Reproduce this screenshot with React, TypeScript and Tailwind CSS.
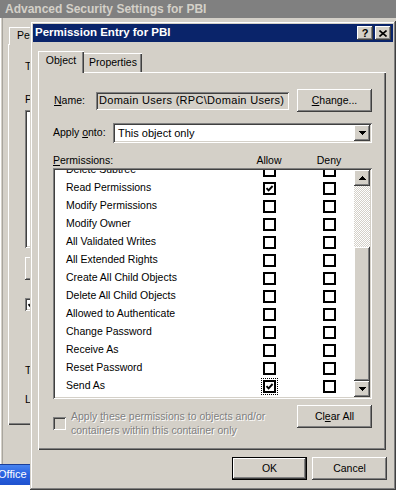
import React from "react";

const RAISED =
  "shadow-[inset_-1px_-1px_#404040,inset_1px_1px_#ffffff,inset_-2px_-2px_#808080,inset_2px_2px_#d4d0c8]";
const SUNKEN =
  "shadow-[inset_1px_1px_#808080,inset_-1px_-1px_#ffffff,inset_2px_2px_#404040,inset_-2px_-2px_#d4d0c8]";

function Btn({ children, className = "" }: { children?: React.ReactNode; className?: string }) {
  return (
    <div className={`flex items-center justify-center bg-[#d4d0c8] ${RAISED} ${className}`}>{children}</div>
  );
}

function Arrow({ down }: { down?: boolean }) {
  return (
    <svg width="7" height="4" viewBox="0 0 7 4" shapeRendering="crispEdges">
      {down ? (
        <path d="M0 0H7V1H6V2H5V3H4V4H3V3H2V2H1V1H0Z" fill="#000" />
      ) : (
        <path d="M3 0H4V1H5V2H6V3H7V4H0V3H1V2H2V1H3Z" fill="#000" />
      )}
    </svg>
  );
}

function Box({ checked, focus }: { checked?: boolean; focus?: boolean }) {
  const box = (
    <div className="w-[13px] h-[13px] border-2 border-black bg-white flex items-center justify-center">
      {checked && (
        <svg width="9" height="9" viewBox="0 0 9 9">
          <path d="M1.5 4.2 L3.6 6.4 L7.6 2" stroke="#000" strokeWidth="1.9" fill="none" />
        </svg>
      )}
    </div>
  );
  if (focus) return <div className="border border-dotted border-black p-px">{box}</div>;
  return box;
}

const rows: { name: string; allow?: boolean; focus?: boolean }[] = [
  { name: "Delete Subtree" },
  { name: "Read Permissions", allow: true },
  { name: "Modify Permissions" },
  { name: "Modify Owner" },
  { name: "All Validated Writes" },
  { name: "All Extended Rights" },
  { name: "Create All Child Objects" },
  { name: "Delete All Child Objects" },
  { name: "Allowed to Authenticate" },
  { name: "Change Password" },
  { name: "Receive As" },
  { name: "Reset Password" },
  { name: "Send As", allow: true, focus: true },
];

function BackgroundWindow() {
  return (
    <div className="h-[464px] shrink-0 bg-[#d4d0c8] flex flex-col shadow-[inset_1px_0_#ffffff]">
      <div className="h-[18px] shrink-0 bg-[#808080] pl-[5px] flex items-center text-[12px] font-bold text-[#d4d0c8] whitespace-nowrap">
        Advanced Security Settings for PBI
      </div>
      <div className="flex-1 flex w-[30px] overflow-hidden">
        <div className="w-[3px] shrink-0 border-r border-[#a8a59e]" />
        <div className="flex-1 pl-[5px] pt-[9px] flex flex-col">
          <div className="flex h-[17px]">
            <div className="ml-px w-[80px] shrink-0 h-[18px] -mb-px relative z-10 bg-[#d4d0c8] shadow-[inset_1px_1px_#ffffff,inset_-1px_0_#404040] pl-[8px] leading-[17px] whitespace-nowrap">
              Permissions
            </div>
          </div>
          <div className="w-[500px] shrink-0 h-[381px] shadow-[inset_1px_1px_#ffffff,inset_-1px_-1px_#404040,inset_-2px_-2px_#808080] pl-[17px] flex flex-col whitespace-nowrap">
            <div className="mt-[16px] leading-[13px]">
              To view more information about special permissions, select a permission entry.
            </div>
            <div className="mt-[20px] leading-[13px]">Permission entries:</div>
            <div className={`mt-[4px] h-[138px] w-[400px] bg-white ${SUNKEN}`} />
            <Btn className="mt-[9px] h-[23px] w-[75px]">Add...</Btn>
            <div className="mt-[17px] flex items-center gap-[5px]">
              <div className={`w-[13px] h-[13px] bg-white ${SUNKEN} flex items-center justify-center`}>
                <svg width="9" height="9" viewBox="0 0 9 9">
                  <path d="M1.5 4.2 L3.6 6.4 L7.6 2" stroke="#000" strokeWidth="1.9" fill="none" />
                </svg>
              </div>
              <span>Allow inheritable permissions from the parent to propagate</span>
            </div>
            <div className="mt-[51px] leading-[13px]">The permissions on this object are</div>
            <div className="mt-[16px] leading-[13px]">Learn more about special permissions.</div>
          </div>
        </div>
      </div>
    </div>
  );
}

function Dialog() {
  return (
    <div className="absolute z-30 left-[30px] top-[21px] w-[366px] h-[469px] bg-[#d4d0c8] p-[3px] flex flex-col shadow-[inset_-1px_-1px_#404040,inset_1px_1px_#d4d0c8,inset_-2px_-2px_#808080,inset_2px_2px_#ffffff]">
      {/* title bar */}
      <div className="h-[18px] shrink-0 bg-[#0a246a] flex items-center justify-between pl-[2px] pr-[2px]">
        <span className="text-white font-bold text-[11.5px] whitespace-nowrap">Permission Entry for PBI</span>
        <div className="flex gap-[2px]">
          <Btn className="w-[16px] h-[14px]">
            <span className="font-bold text-[11px] leading-none">?</span>
          </Btn>
          <Btn className="w-[16px] h-[14px]">
            <svg width="8" height="7" viewBox="0 0 8 7">
              <path d="M0.5 0.5 L7.5 6.5 M7.5 0.5 L0.5 6.5" stroke="#000" strokeWidth="1.6" />
            </svg>
          </Btn>
        </div>
      </div>

      {/* tabs */}
      <div className="mt-[9px] ml-[5px] flex items-end h-[21px]">
        <div className="w-[46px] h-[22px] -mb-px relative z-10 bg-[#d4d0c8] shadow-[inset_1px_1px_#ffffff,inset_-1px_0_#404040,inset_-2px_0_#808080] flex items-center justify-center pb-[2px]">
          Object
        </div>
        <div className="w-[58px] h-[19px] shadow-[inset_0_1px_#ffffff,inset_-1px_0_#404040,inset_-2px_0_#808080] flex items-center justify-center">
          Properties
        </div>
      </div>

      {/* panel */}
      <div className="ml-[5px] w-[348px] h-[378px] shrink-0 pl-[15px] pr-[14px] flex flex-col shadow-[inset_1px_1px_#ffffff,inset_-1px_-1px_#404040,inset_-2px_-2px_#808080]">
        {/* name row */}
        <div className="mt-[17px] h-[23px] flex items-center">
          <div className="w-[43px] pl-px">
            <span className="underline">N</span>ame:
          </div>
          <div className={`w-[193px] h-[18px] ${SUNKEN} bg-[#d4d0c8] pl-[3px] flex items-center text-[11px] tracking-[0.3px] whitespace-nowrap overflow-hidden`}>
            Domain Users (RPC\Domain Users)
          </div>
          <Btn className="ml-[8px] w-[75px] h-[23px]">
            <span>
              <span className="underline">C</span>hange...
            </span>
          </Btn>
        </div>

        {/* apply onto */}
        <div className="mt-[11px] h-[20px] flex items-center">
          <div className="w-[60px]">
            Apply <span className="underline">o</span>nto:
          </div>
          <div className={`w-[259px] h-[20px] bg-white ${SUNKEN} p-[2px] flex items-center`}>
            <div className="flex-1 pl-[3px] text-[11px]">This object only</div>
            <Btn className="w-[16px] h-[16px]">
              <Arrow down />
            </Btn>
          </div>
        </div>

        {/* header */}
        <div className="mt-[10px] h-[14px] pl-[2px] pr-[18px] grid grid-cols-[1fr_70px_50px] items-center">
          <div className="-ml-[2px]">
            <span className="underline">P</span>ermissions:
          </div>
          <div className="text-center">Allow</div>
          <div className="text-center">Deny</div>
        </div>

        {/* list */}
        <div className={`mt-px h-[231px] bg-white ${SUNKEN} p-[2px] flex`}>
          <div className="flex-1 overflow-hidden">
            <div className="-mt-[9px]">
              {rows.map((r) => (
                <div key={r.name} className="h-[18px] grid grid-cols-[1fr_70px_50px] items-center">
                  <div className="pl-[11px] whitespace-nowrap">{r.name}</div>
                  <div className="flex justify-center">
                    <Box checked={r.allow} focus={r.focus} />
                  </div>
                  <div className="flex justify-center">
                    <Box />
                  </div>
                </div>
              ))}
            </div>
          </div>
          <div className="w-[16px] flex flex-col">
            <Btn className="h-[16px]">
              <Arrow />
            </Btn>
            <div className="h-[61px] bg-[image:repeating-conic-gradient(#d4d0c8_0_25%,#ffffff_0_50%)] bg-[length:2px_2px]" />
            <Btn className="flex-1" />
            <Btn className="h-[16px]">
              <Arrow down />
            </Btn>
          </div>
        </div>

        {/* bottom row */}
        <div className="mt-[6px] flex justify-between items-start">
          <div className="mt-[4px] flex items-center gap-[5px]">
            <div className={`w-[13px] h-[13px] bg-[#d4d0c8] ${SUNKEN}`} />
            <div className="leading-[14px] text-[#808080] [text-shadow:1px_1px_0_#ffffff]">
              <div>
                Apply <span className="underline">t</span>hese permissions to objects and/or
              </div>
              <div>containers within this container only</div>
            </div>
          </div>
          <Btn className="w-[75px] h-[23px]">
            <span>
              Cl<span className="underline">e</span>ar All
            </span>
          </Btn>
        </div>
      </div>

      {/* buttons */}
      <div className="mt-[7px] pr-[6px] flex justify-end gap-[5px]">
        <div className="w-[75px] h-[23px] border border-black">
          <Btn className="w-full h-full">OK</Btn>
        </div>
        <Btn className="w-[75px] h-[23px]">Cancel</Btn>
      </div>
    </div>
  );
}

export default function App() {
  return (
    <div className="relative w-[396px] h-[493px] overflow-hidden bg-white font-['Liberation_Sans',Arial,sans-serif] text-[10.5px] text-black flex flex-col">
      <BackgroundWindow />
      <div className="h-[21px] w-[32px] shrink-0 overflow-hidden bg-gradient-to-b from-[#4a86f0] via-[#2a62e0] to-[#1f52cf] flex items-center text-white text-[11px] -ml-[2px] whitespace-nowrap shadow-[inset_0_1px_#1a3e9a]">
        Office Project
      </div>
      <div className="flex-1 bg-white" />
      <Dialog />
    </div>
  );
}
